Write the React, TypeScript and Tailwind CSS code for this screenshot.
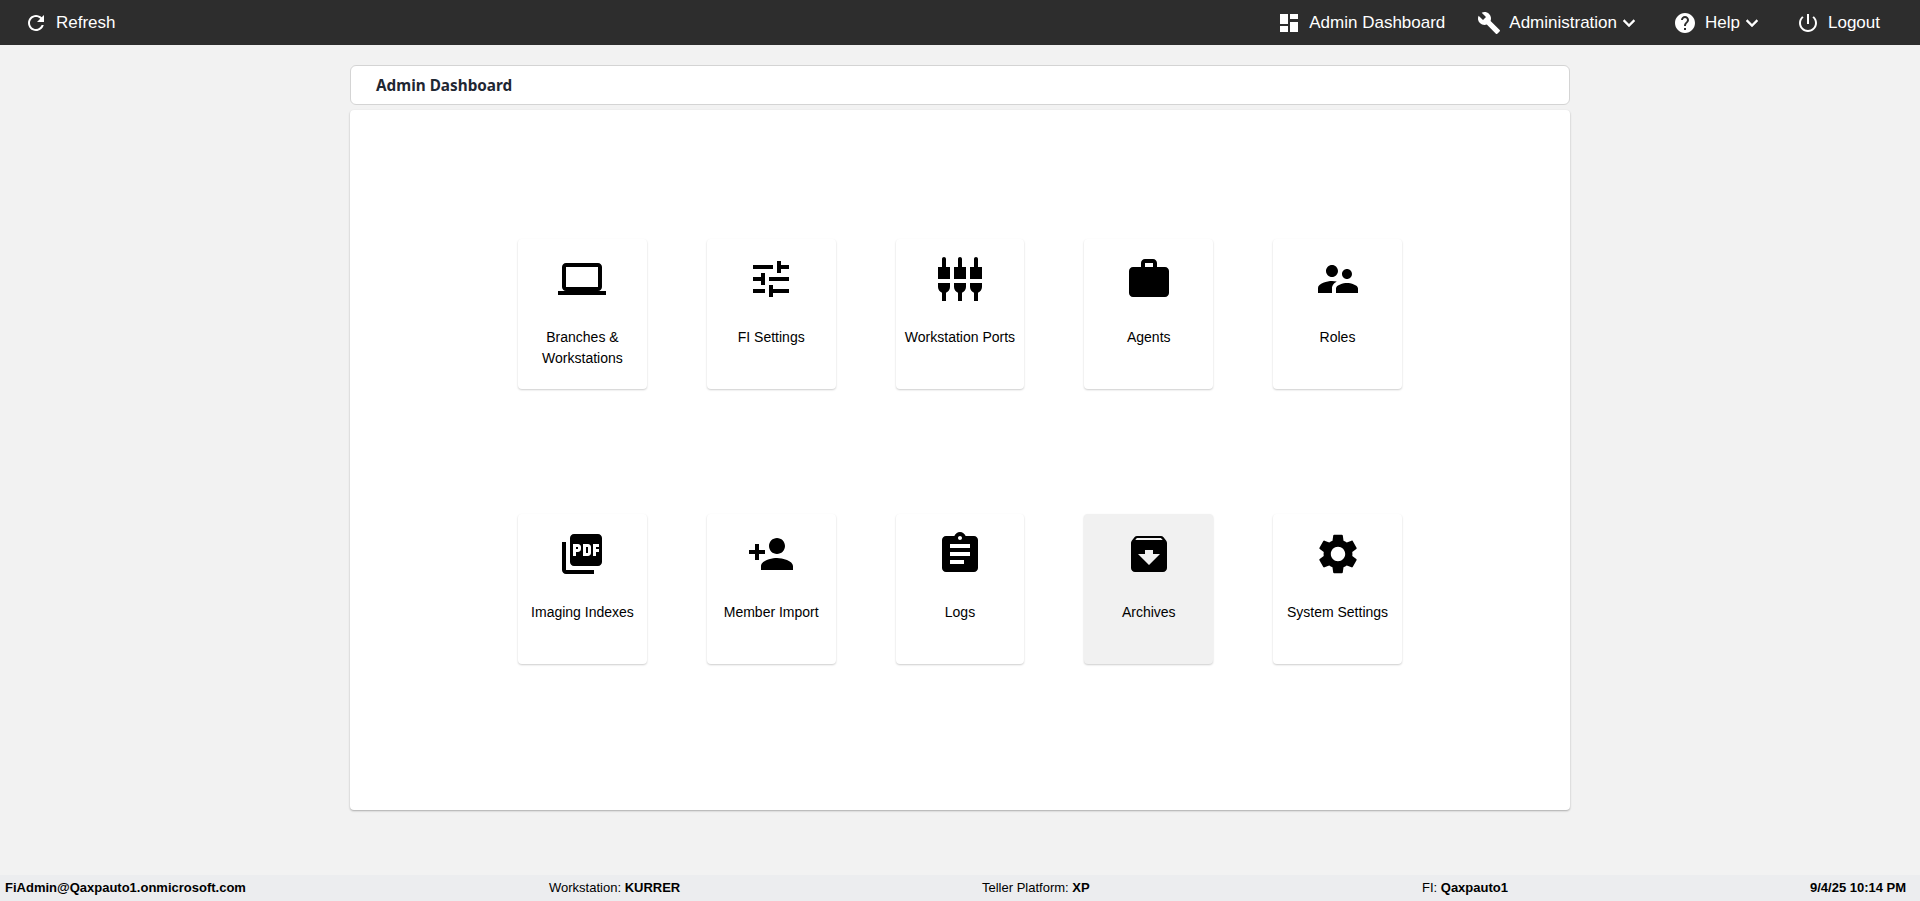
import type { ReactNode } from 'react';

const FONT = "font-['Liberation_Sans',Arial,sans-serif]";

function Icon({ d, size = 24, className = '', bold }: { d: string; size?: number; className?: string; bold?: boolean }) {
  return (
    <svg
      viewBox="0 0 24 24"
      width={size}
      height={size}
      fill="currentColor"
      stroke={bold ? 'currentColor' : undefined}
      strokeWidth={bold ? 0.4 : undefined}
      className={`shrink-0 ${className}`}
    >
      <path d={d} />
    </svg>
  );
}

const paths = {
  refresh: 'M17.65 6.35C16.2 4.9 14.21 4 12 4c-4.42 0-7.99 3.58-7.99 8s3.57 8 7.99 8c3.73 0 6.84-2.55 7.73-6h-2.08c-.82 2.33-3.04 4-5.65 4-3.31 0-6-2.69-6-6s2.69-6 6-6c1.66 0 3.14.69 4.22 1.78L13 11h7V4l-2.35 2.35z',
  dashboard: 'M3 13h8V3H3v10zm0 8h8v-6H3v6zm10 0h8V11h-8v10zm0-19v6h8V3h-8z',
  build: 'M22.7 19l-9.1-9.1c.9-2.3.4-5-1.5-6.9-2-2-5-2.4-7.4-1.3L9 6 6 9 1.6 4.7C.4 7.1.9 10.1 2.9 12.1c1.9 1.9 4.6 2.4 6.9 1.5l9.1 9.1c.4.4 1 .4 1.4 0l2.3-2.3c.5-.4.5-1.1.1-1.4z',
  help: 'M12 2C6.48 2 2 6.48 2 12s4.48 10 10 10 10-4.48 10-10S17.52 2 12 2zm1 17h-2v-2h2v2zm2.07-7.75l-.9.92C13.45 12.9 13 13.5 13 15h-2v-.5c0-1.1.45-2.1 1.17-2.83l1.24-1.26c.37-.36.59-.86.59-1.41 0-1.1-.9-2-2-2s-2 .9-2 2H8c0-2.21 1.79-4 4-4s4 1.79 4 4c0 .88-.36 1.68-.93 2.25z',
  power: 'M13 3h-2v10h2V3zm4.83 2.17l-1.42 1.42C17.99 7.86 19 9.81 19 12c0 3.87-3.13 7-7 7s-7-3.13-7-7c0-2.19 1.01-4.14 2.58-5.42L6.17 5.17C4.23 6.82 3 9.26 3 12c0 4.97 4.03 9 9 9s9-4.03 9-9c0-2.74-1.23-5.18-3.17-6.83z',
  chevron: 'M16.59 8.59L12 13.17 7.41 8.59 6 10l6 6 6-6z',
  laptop: 'M20 18c1.1 0 1.99-.9 1.99-2L22 6c0-1.1-.9-2-2-2H4c-1.1 0-2 .9-2 2v10c0 1.1.9 2 2 2H0v2h24v-2h-4zM4 6h16v10H4V6z',
  tune: 'M3 17v2h6v-2H3zM3 5v2h10V5H3zm10 16v-2h8v-2h-8v-2h-2v6h2zM7 9v2H3v2h4v2h2V9H7zm14 4v-2H11v2h10zm-6-4h2V7h4V5h-4V3h-2v6z',
  ports: 'M5 2c0-.55-.45-1-1-1s-1 .45-1 1v4H1v6h6V6H5V2zm4 14c0 1.3.84 2.4 2 2.82V23h2v-4.18c1.16-.41 2-1.51 2-2.82v-2H9v2zm-8 0c0 1.3.84 2.4 2 2.82V23h2v-4.18C6.16 18.4 7 17.3 7 16v-2H1v2zM21 6V2c0-.55-.45-1-1-1s-1 .45-1 1v4h-2v6h6V6h-2zm-8-4c0-.55-.45-1-1-1s-1 .45-1 1v4H9v6h6V6h-2V2zm4 14c0 1.3.84 2.4 2 2.82V23h2v-4.18c1.16-.41 2-1.51 2-2.82v-2h-6v2z',
  work: 'M20 6h-4V4c0-1.11-.89-2-2-2h-4c-1.11 0-2 .89-2 2v2H4c-1.11 0-1.99.89-1.99 2L2 19c0 1.11.89 2 2 2h16c1.11 0 2-.89 2-2V8c0-1.11-.89-2-2-2zm-6 0h-4V4h4v2z',
  roles: 'M16.5 12c1.38 0 2.49-1.12 2.49-2.5S17.88 7 16.5 7C15.12 7 14 8.12 14 9.5s1.12 2.5 2.5 2.5zM9 11c1.66 0 2.99-1.34 2.99-3S10.66 5 9 5C7.34 5 6 6.34 6 8s1.34 3 3 3zm7.5 3c-1.83 0-5.5.92-5.5 2.75V19h11v-2.25c0-1.83-3.67-2.75-5.5-2.75zM9 13c-2.33 0-7 1.17-7 3.5V19h7v-2.25c0-.85.33-2.34 2.37-3.47C10.5 13.1 9.66 13 9 13z',
  pdf: 'M20 2H8c-1.1 0-2 .9-2 2v12c0 1.1.9 2 2 2h12c1.1 0 2-.9 2-2V4c0-1.1-.9-2-2-2zm-8.5 7.5c0 .83-.67 1.5-1.5 1.5H9v2H7.5V7H10c.83 0 1.5.67 1.5 1.5v1zm5 2c0 .83-.67 1.5-1.5 1.5h-2.5V7H15c.83 0 1.5.67 1.5 1.5v3zm4-3H19v1h1.5V11H19v2h-1.5V7h3v1.5zM9 9.5h1v-1H9v1zM4 6H2v14c0 1.1.9 2 2 2h14v-2H4V6zm10 5.5h1v-3h-1v3z',
  personAdd: 'M15 12c2.21 0 4-1.79 4-4s-1.79-4-4-4-4 1.79-4 4 1.79 4 4 4zm-9-2V7H4v3H1v2h3v3h2v-3h3v-2H6zm9 4c-2.67 0-8 1.34-8 4v2h16v-2c0-2.66-5.33-4-8-4z',
  assignment: 'M19 3h-4.18C14.4 1.84 13.3 1 12 1c-1.3 0-2.4.84-2.82 2H5c-1.1 0-2 .9-2 2v14c0 1.1.9 2 2 2h14c1.1 0 2-.9 2-2V5c0-1.1-.9-2-2-2zm-7 0c.55 0 1 .45 1 1s-.45 1-1 1-1-.45-1-1 .45-1 1-1zm2 14H7v-2h7v2zm3-4H7v-2h10v2zm0-4H7V7h10v2z',
  archive: 'M20.54 5.23l-1.39-1.68C18.88 3.21 18.47 3 18 3H6c-.47 0-.88.21-1.16.55L3.46 5.23C3.17 5.57 3 6.02 3 6.5V19c0 1.1.9 2 2 2h14c1.1 0 2-.9 2-2V6.5c0-.48-.17-.93-.46-1.27zM12 17.5L6.5 12H10v-2h4v2h3.5L12 17.5zM5.12 5l.81-1h12l.94 1H5.12z',
  settings: 'M19.14 12.94c.04-.3.06-.61.06-.94 0-.32-.02-.64-.07-.94l2.03-1.58c.18-.14.23-.41.12-.61l-1.92-3.32c-.12-.22-.37-.29-.59-.22l-2.39.96c-.5-.38-1.03-.7-1.62-.94l-.36-2.54c-.04-.24-.24-.41-.48-.41h-3.84c-.24 0-.43.17-.47.41l-.36 2.54c-.59.24-1.13.57-1.62.94l-2.39-.96c-.22-.08-.47 0-.59.22L2.74 8.87c-.12.21-.08.47.12.61l2.03 1.58c-.05.3-.09.63-.09.94s.02.64.07.94l-2.03 1.58c-.18.14-.23.41-.12.61l1.92 3.32c.12.22.37.29.59.22l2.39-.96c.5.38 1.03.7 1.62.94l.36 2.54c.05.24.24.41.48.41h3.84c.24 0 .44-.17.47-.41l.36-2.54c.59-.24 1.13-.56 1.62-.94l2.39.96c.22.08.47 0 .59-.22l1.92-3.32c.12-.22.07-.47-.12-.61l-2.01-1.58zM12 15.6c-1.98 0-3.6-1.62-3.6-3.6s1.62-3.6 3.6-3.6 3.6 1.62 3.6 3.6-1.62 3.6-3.6 3.6z',
};

function NavItem({ icon, label, menu }: { icon: string; label: string; menu?: boolean }) {
  return (
    <div className="flex items-center gap-2">
      <Icon d={icon} />
      <span className="text-[17px]">{label}</span>
      {menu && <Icon d={paths.chevron} className="-ml-2" bold />}
    </div>
  );
}

function Tile({ icon, label, active }: { icon: string; label: ReactNode; active?: boolean }) {
  return (
    <div
      className={`w-[128.9px] h-[150px] rounded-[4px] pt-4 flex flex-col items-center text-center text-black shadow-[0_1px_2px_rgba(0,0,0,0.2)] ${
        active ? 'bg-[#f1f1f1]' : 'bg-white'
      }`}
    >
      <Icon d={icon} size={48} />
      <div className="mt-6 text-sm leading-[21px]">{label}</div>
    </div>
  );
}

const rowOne = [
  { icon: paths.laptop, label: <>Branches &<br />Workstations</> },
  { icon: paths.tune, label: 'FI Settings' },
  { icon: paths.ports, label: 'Workstation Ports' },
  { icon: paths.work, label: 'Agents' },
  { icon: paths.roles, label: 'Roles' },
];

const rowTwo = [
  { icon: paths.pdf, label: 'Imaging Indexes' },
  { icon: paths.personAdd, label: 'Member Import' },
  { icon: paths.assignment, label: 'Logs' },
  { icon: paths.archive, label: 'Archives', active: true },
  { icon: paths.settings, label: 'System Settings' },
];

export default function App() {
  return (
    <div className={`h-[901px] flex flex-col bg-[#f2f2f2] overflow-hidden ${FONT}`}>
      {/* Top bar */}
      <header className="h-[45px] shrink-0 bg-[#2d2d2d] text-white flex items-center justify-between pl-6 pr-10">
        <div className="flex items-center gap-2">
          <Icon d={paths.refresh} />
          <span className="text-[17px]">Refresh</span>
        </div>
        <nav className="flex items-center gap-8">
          <NavItem icon={paths.dashboard} label="Admin Dashboard" />
          <NavItem icon={paths.build} label="Administration" menu />
          <NavItem icon={paths.help} label="Help" menu />
          <NavItem icon={paths.power} label="Logout" />
        </nav>
      </header>

      {/* Main */}
      <main className="flex-1 w-[1220px] mx-auto pt-5">
        <div className="h-[40px] bg-white border border-[#d4d4d4] rounded-[6px] pl-[25px] flex items-center text-[15.3px] font-bold text-[#1f2733] font-['Noto_Sans',sans-serif]">
          Admin Dashboard
        </div>
        <section className="mt-[5px] h-[700px] bg-white rounded-[4px] shadow-[0_1px_2px_rgba(0,0,0,0.3)] pt-[129px]">
          <div className="w-[884px] mx-auto flex flex-col gap-[125px]">
            <div className="flex justify-between">
              {rowOne.map((t, i) => (
                <Tile key={i} {...t} />
              ))}
            </div>
            <div className="flex justify-between">
              {rowTwo.map((t, i) => (
                <Tile key={i} {...t} />
              ))}
            </div>
          </div>
        </section>
      </main>

      {/* Status bar */}
      <footer className="h-[26px] shrink-0 bg-[#ecedef] text-black text-[13px] flex items-center pl-[5px]">
        <div className="w-[544px] font-bold">FiAdmin@Qaxpauto1.onmicrosoft.com</div>
        <div className="w-[433px]">Workstation: <b>KURRER</b></div>
        <div className="w-[440px]">Teller Platform: <b>XP</b></div>
        <div className="w-[388px]">FI: <b>Qaxpauto1</b></div>
        <div className="font-bold">9/4/25 10:14 PM</div>
      </footer>
    </div>
  );
}
